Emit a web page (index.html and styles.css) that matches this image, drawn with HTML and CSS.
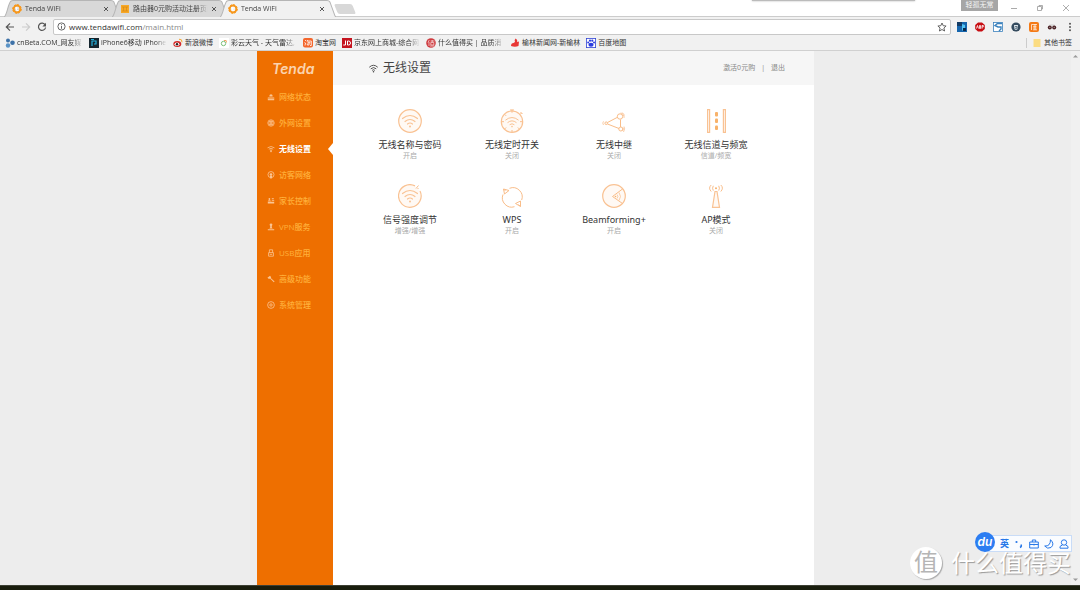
FILE: index.html
```html
<!DOCTYPE html>
<html lang="zh-CN">
<head>
<meta charset="utf-8">
<title>Tenda WiFi</title>
<link rel="stylesheet" href="styles.css">
</head>
<body>
<svg class="defs" aria-hidden="true">
  <symbol id="tenda" viewBox="0 0 10 10"><circle cx="5" cy="5" r="3.400" fill="none" stroke="#f7981d" stroke-width="2"/><circle cx="5" cy="5" r="4.300" fill="none" stroke="#f7981d" stroke-dasharray="2 1.300"/><path d="M3 4h3.500M4.500 3v3.500h2" stroke="#fff" stroke-width="1" fill="none"/></symbol>
  <symbol id="close" viewBox="0 0 6 6"><path d="M1 1l4 4M5 1l-4 4" stroke="#555" stroke-width="1"/></symbol>
  <symbol id="tab" viewBox="0 0 116 16" preserveAspectRatio="none"><path d="M0 16C3 15 4 3 7 1Q8 0.500 9 0.500H107Q109 0.500 110 2L115 15L116 16" stroke="#b5b5b5" stroke-width="1"/></symbol>
  <symbol id="wifi" viewBox="0 0 24 24"><g fill="none" stroke="currentColor" stroke-width="1.200" stroke-linecap="round"><path d="M4.500 9.500Q12 3.500 19.500 9.500"/><path d="M7 12.500Q12 8.500 17 12.500"/><path d="M9.500 15Q12 13 14.500 15"/></g><circle cx="12" cy="17.500" r="1" fill="currentColor"/></symbol>
</svg>

<header class="browser">
  <div class="tabs">
    <div class="tab"><svg class="tab-shape"><use href="#tab"/></svg><svg class="fav"><use href="#tenda"/></svg><span class="tab-title">Tenda WiFi</span><button class="tab-close" aria-label="关闭标签"><svg><use href="#close"/></svg></button></div>
    <div class="tab"><svg class="tab-shape"><use href="#tab"/></svg><svg class="fav" viewBox="0 0 10 10"><rect x="1" y="1" width="8" height="8" fill="#f7a827"/><path d="M2 3h6M2 7h6M3.500 3v4M6.500 3v4" stroke="#d98a12" stroke-width=".7"/></svg><span class="tab-title">路由器0元购活动注册页面</span><button class="tab-close" aria-label="关闭标签"><svg><use href="#close"/></svg></button></div>
    <div class="tab active"><svg class="tab-shape"><use href="#tab"/></svg><svg class="fav"><use href="#tenda"/></svg><span class="tab-title">Tenda WiFi</span><button class="tab-close" aria-label="关闭标签"><svg><use href="#close"/></svg></button></div>
    <button class="new-tab" aria-label="新标签页"></button>
    <div class="window-shadow"></div>
    <div class="window-controls">
      <span class="user">轻孤无常</span>
      <button aria-label="最小化"><svg viewBox="0 0 8 8"><path d="M1 4.500h6" stroke="#aaa"/></svg></button>
      <button aria-label="还原"><svg viewBox="0 0 8 8"><path d="M1.500 2.500h4v4h-4zM3 2.500v-1h3.500V5h-1" fill="none" stroke="#999" stroke-width=".8"/></svg></button>
      <button aria-label="关闭"><svg viewBox="0 0 8 8"><path d="M1 1l6 6M7 1l-6 6" stroke="#999" stroke-width=".8"/></svg></button>
    </div>
  </div>

  <div class="toolbar">
    <button aria-label="后退"><svg viewBox="0 0 10 10"><path d="M9 5H1.500M5 1.300L1.300 5L5 8.700" fill="none" stroke="#555" stroke-width="1.200"/></svg></button>
    <button aria-label="前进"><svg viewBox="0 0 10 10"><path d="M1 5h7.500M5 1.300L8.700 5L5 8.700" fill="none" stroke="#ccc" stroke-width="1.200"/></svg></button>
    <button aria-label="刷新"><svg viewBox="0 0 10 10"><path d="M8.200 3A3.600 3.600 0 1 0 8.600 5.500" fill="none" stroke="#555" stroke-width="1.200"/><path d="M9 .8V4.400H5.400z" fill="#555"/></svg></button>
    <div class="address">
      <svg class="ico9" viewBox="0 0 10 10"><circle cx="5" cy="5" r="4" fill="none" stroke="#555"/><path d="M5 4.400V7.500M5 2.500v1" stroke="#555"/></svg>
      <span class="url">www.tendawifi.com<i>/main.html</i></span>
      <button aria-label="收藏"><svg viewBox="0 0 10 10"><path d="M5 1l1.200 2.700 2.900.3L6.900 6l.7 3L5 7.500 2.400 9l.7-3L.9 4l2.900-.3z" fill="none" stroke="#555" stroke-width=".9"/></svg></button>
    </div>
    <div class="extensions">
      <button aria-label="扩展"><svg viewBox="0 0 10 10"><rect width="10" height="10" fill="#1565ad"/><path d="M0 0h5v4H0z" fill="#123a63"/><path d="M5 2l3 1v3L5 9z" fill="#53c4f2"/><path d="M6 6h3v3H6z" fill="#0a2b50"/></svg></button>
      <button aria-label="广告拦截"><svg viewBox="0 0 10 10"><path d="M3 0.500h4L9.800 3v4L7 9.500H3L.2 7V3z" fill="#c70d12"/><path d="M1.500 6.500l1-3 1 3M4.500 3.500v3h1v-3zM7 6.700V3.500h1.300v1.400H7" stroke="#fff" stroke-width=".8" fill="none"/></svg></button>
      <button aria-label="同步"><svg viewBox="0 0 10 10"><rect x=".5" y=".5" width="9" height="9" fill="#fff" stroke="#3c82bd" stroke-width=".8"/><path d="M9 1.500H4.500L2 3.500L5 5h3v2L6 9" fill="none" stroke="#3c82bd" stroke-width="1.400"/></svg></button>
      <button aria-label="脚本"><svg viewBox="0 0 10 10"><circle cx="5" cy="5" r="4.600" fill="#344b5e"/><path d="M3 3h4L6.500 7.300 5 8 3.500 7.300z" fill="#dce5ea"/><path d="M4 4.500h2v1.800H4" stroke="#344b5e" stroke-width=".7" fill="none"/></svg></button>
      <button aria-label="购物"><svg viewBox="0 0 10 10"><rect width="10" height="10" rx="2" fill="#f47a16"/><path d="M2.500 8V2.500H8M4 4.300h3.500M4 6h3.500M4 7.800h4M6 2v6" stroke="#fff" stroke-width=".7" fill="none"/></svg></button>
      <button aria-label="隐身"><svg viewBox="0 0 10 10"><path d="M2 2.800Q5 1 8 2.800V4H2z" fill="#ddd"/><circle cx="2.800" cy="5.400" r="2" fill="#4a2024"/><circle cx="7.200" cy="5.400" r="2" fill="#4a2024"/><path d="M2 5.400h1.500M6.500 5.400H8" stroke="#ccc" stroke-width=".6"/></svg></button>
      <button aria-label="菜单"><svg viewBox="0 0 10 10"><g fill="#555"><circle cx="5" cy="1.800" r="1"/><circle cx="5" cy="5" r="1"/><circle cx="5" cy="8.200" r="1"/></g></svg></button>
    </div>
  </div>

  <nav class="bookmarks" aria-label="书签">
    <a href="#"><svg viewBox="0 0 10 10"><circle cx="3" cy="2.500" r="2" fill="#3e72a8"/><circle cx="7.500" cy="4.800" r="2.300" fill="#3e72a8"/><circle cx="3" cy="7.500" r="2.200" fill="#5b93c6"/></svg><span>cnBeta.COM_网友媒</span></a>
    <a href="#"><svg viewBox="0 0 10 10"><rect width="10" height="10" fill="#15252e"/><path d="M3 8V3h4v3H5M2 1.500h3" stroke="#25b2dd" stroke-width="1.200" fill="none"/></svg><span>iPhone6移动 iPhone</span></a>
    <a href="#"><svg viewBox="0 0 10 10"><ellipse cx="4.300" cy="6" rx="4" ry="3" fill="#d52b2a"/><ellipse cx="4" cy="6.200" rx="2.400" ry="1.800" fill="#fff"/><circle cx="4" cy="6.300" r="1.200" fill="#222"/><path d="M6 1.200Q9.500 1 9 4.300" stroke="#f5a52c" fill="none"/></svg><span>新浪微博</span></a>
    <a href="#"><svg viewBox="0 0 10 10"><rect width="10" height="10" fill="#fff"/><circle cx="4.500" cy="5.500" r="2.200" fill="none" stroke="#7cc07a"/><path d="M5 2.500Q8 1.500 7.500 4.500" stroke="#f4a261" fill="none"/></svg><span>彩云天气 - 天气雷达,</span></a>
    <a href="#"><svg viewBox="0 0 10 10"><rect width="10" height="9.500" rx="2" fill="#f4662c"/><path d="M2 2l1 1M1.500 4.500l1 .5L2 7.500M4.500 2L4 3.500M4 3h4.300v4.500H7M4.500 4.800h3M6 3.500V7H4.300V5.500" stroke="#fff" stroke-width=".8" fill="none"/></svg><span>淘宝网</span></a>
    <a href="#"><svg viewBox="0 0 10 10"><rect width="10" height="10" fill="#c5141f"/><path d="M3.500 2.500V7H1.300M5.500 3v4h1Q8.500 7 8.500 5T6.500 3z" stroke="#fff" fill="none"/></svg><span>京东网上商城-综合网</span></a>
    <a href="#"><svg viewBox="0 0 10 10"><circle cx="5" cy="5" r="4.800" fill="#cf3c40"/><path d="M3.300 2L2 4.500M3 4v4M4.500 3h4M6.200 2v2M4.800 4.500h3V7h-3zM4 8h4.300" stroke="#fff" stroke-width=".6" fill="none"/></svg><span>什么值得买 | 品质消</span></a>
    <a href="#"><svg viewBox="0 0 10 10"><path d="M5.500.5Q8 2 7 4L9 3.500 8.500 8Q5 9.500 1 8 1 5 3.500 5L5 4Q4 2 5.500.5z" fill="#e83735"/></svg><span>榆林新闻网-新榆林</span></a>
    <a href="#"><svg viewBox="0 0 10 10"><rect x=".4" y=".4" width="9.200" height="9.200" fill="#fff" stroke="#3044d5" stroke-width=".8"/><g fill="#2b3ddf"><ellipse cx="5" cy="6.800" rx="2.600" ry="2"/><circle cx="2.200" cy="4.500" r="1"/><circle cx="4" cy="2.700" r="1.100"/><circle cx="6.300" cy="2.700" r="1.100"/><circle cx="8" cy="4.500" r="1"/></g></svg><span>百度地图</span></a>
    <a class="other" href="#"><svg viewBox="0 0 10 10"><path d="M1.500 1h7v8h-7z" fill="#fbdc82"/></svg><span>其他书签</span></a>
  </nav>
</header>

<div class="viewport">
  <div class="page">
    <aside class="sidebar">
      <div class="logo">Tenda</div>
      <nav class="menu">
        <a href="#"><svg viewBox="0 0 10 10"><path d="M3 3.500a2 2 0 0 1 4 0v1H3z M1 5.500h8V9H1z"/><path d="M1 7h8" stroke="#ee6f00" stroke-width=".6"/></svg>网络状态</a>
        <a href="#"><svg viewBox="0 0 10 10"><circle cx="5" cy="5" r="4" class="line"/><path d="M1.500 5h7M5 1.500v7M2.500 3Q5 4 7.500 3M2.500 7Q5 6 7.500 7" class="line"/></svg>外网设置</a>
        <a class="current" href="#"><svg viewBox="0 0 10 10"><path d="M.7 3.500Q5 .3 9.300 3.500M2.300 5.200Q5 3.200 7.700 5.200M3.700 6.700Q5 5.700 6.300 6.700" class="line"/><circle cx="5" cy="8" r="1"/></svg>无线设置</a>
        <a href="#"><svg viewBox="0 0 10 10"><circle cx="5" cy="4.500" r="3.800" class="line"/><circle cx="5" cy="4.300" r="1.600"/><path d="M3.700 6h2.600L6 9.500H4z"/></svg>访客网络</a>
        <a href="#"><svg viewBox="0 0 10 10"><circle cx="3" cy="2.500" r="1.100"/><path d="M1 5.200Q1 4 3 4T5 5.200zM6 1.700h2.500v1.200H6z M1 6h8V8H1zM6 4h3v1H6z"/></svg>家长控制</a>
        <a href="#"><svg viewBox="0 0 10 10"><circle cx="5" cy="2.300" r="1.700"/><path d="M4 3h2v2.200L7 7H3l1-1.800zM1 7.800h8V9H1z"/></svg>VPN服务</a>
        <a href="#"><svg viewBox="0 0 10 10"><path d="M3 4.500V1h4v3.500M2 4.500h6v4.500H2zM3.500 6.700h3" class="line"/></svg>USB应用</a>
        <a href="#"><svg viewBox="0 0 10 10"><path d="M.5 3.500L3.800 1 5.200 2.800 4.700 3.600 9.500 8.200 8.500 9.200 3.800 4.500 2.500 5z"/></svg>高级功能</a>
        <a href="#"><svg viewBox="0 0 10 10"><circle cx="5" cy="5" r="4.200" class="line"/><circle cx="5" cy="5" r="1.500" class="line"/></svg>系统管理</a>
      </nav>
    </aside>

    <main class="content">
      <div class="title-bar">
        <svg class="title-icon" viewBox="3 4 18 16"><g fill="none" stroke="currentColor" stroke-width="1.800"><path d="M3.500 9.500Q12 1.500 20.500 9.500M6.500 12.700Q12 7.500 17.500 12.700M9.300 15.800Q12 13 14.700 15.800"/></g><circle cx="12" cy="18.300" r="1.500" fill="currentColor"/></svg>
        <h1>无线设置</h1>
        <div class="account"><a href="#">激活0元购</a><span>|</span><a href="#">退出</a></div>
      </div>
      <div class="cards">
        <a class="card" href="#"><svg viewBox="0 0 24 24"><circle cx="12" cy="12" r="11.300" class="disc"/><use href="#wifi" width="24" height="24"/></svg><strong>无线名称与密码</strong><small>开启</small></a>
        <a class="card" href="#"><svg viewBox="0 0 24 24"><circle cx="12" cy="12.700" r="10.700" class="disc"/><path class="line" d="M10 1h4M12 .7v3M20.500 3l2 2M21.500 4L20 5.500M1.500 12.700H4M20 12.700h2.500M12 21v2M4.600 5.300l1.500 1.500M4.600 20l1.500-1.500M19.400 20l-1.500-1.500"/><svg x="2" y="3" width="20" height="20"><use href="#wifi"/></svg></svg><strong>无线定时开关</strong><small>关闭</small></a>
        <a class="card" href="#"><svg viewBox="0 0 24 24"><path class="line" d="M5.500 13.500L16 8M5.500 15L17 19.500M18.500 10.500V18"/><circle class="line" cx="18" cy="7.500" r="2.700"/><circle class="line" cx="18.800" cy="20" r="2"/><circle class="line" cx="4.200" cy="14.200" r="1.300"/><path class="thin" d="M20.300 3.500Q23 5 22 9M18.500 4Q21.500 4 21.500 7M22 17.500Q23.500 19.500 21.500 23M21 18.500Q22 20 20.500 22M1.500 12.300Q0 14 1.500 16"/></svg><strong>无线中继</strong><small>关闭</small></a>
        <a class="card" href="#"><svg viewBox="0 0 24 24"><path class="disc" d="M3.600.6h2v22.800h-2zM19.400.6h2v22.800h-2z"/><g fill="#f8b26a"><rect x="11" y="3" width="3" height="4.500" rx="1"/><rect x="11" y="9.500" width="3" height="4.500" rx="1"/><rect x="11" y="16.500" width="3" height="4.500" rx="1"/></g></svg><strong>无线信道与频宽</strong><small>信道/频宽</small></a>
        <a class="card" href="#"><svg viewBox="0 0 24 24"><path class="disc" d="M17 1.900A11.300 11.300 0 1 0 22 7"/><path class="line" d="M18 4.500L20.500 1.500M19.500 5l1-1"/><use href="#wifi" width="24" height="24"/></svg><strong>信号强度调节</strong><small>增强/增强</small></a>
        <a class="card" href="#"><svg viewBox="0 0 24 24"><path class="line" d="M9.500 4.300A9.300 9.300 0 0 1 21.700 16M14.500 22.700A9.300 9.300 0 0 1 3 10.500M3.500 5l1 5 4.500-3.500zM3.500 5l2 2M15.500 19.500l5-2.500v5.500zM20.500 22.500l-2-2"/></svg><strong>WPS</strong><small>开启</small></a>
        <a class="card" href="#"><svg viewBox="0 0 24 24"><circle cx="12" cy="12" r="11.300" class="disc"/><path class="line" d="M20.500 5L10.500 12.500 20.500 19.500"/><path class="thin" d="M17 8.500Q20 12.500 17 16.500M15 10.500Q16.800 12.500 15 14.500"/><circle cx="13.500" cy="12.500" r=".8" fill="#f8b26a"/></svg><strong>Beamforming+</strong><small>开启</small></a>
        <a class="card" href="#"><svg viewBox="0 0 24 24"><path class="disc" d="M11 7.500h2L15.500 23.300h-7z"/><circle cx="12" cy="4.200" r="1" fill="#f8b26a"/><path class="line" d="M9.300 1.800Q7.800 4.300 9.300 6.600M7.200 1Q4 4 7.200 7.500M14.700 1.800Q16.200 4.300 14.700 6.600M16.800 1Q20 4 16.800 7.500"/></svg><strong>AP模式</strong><small>关闭</small></a>
      </div>
    </main>
  </div>
  <div class="scrollbar"><svg viewBox="0 0 5 4"><path d="M0 3.500L2.500 1 5 3.500z"/></svg><svg viewBox="0 0 5 4"><path d="M0 .5L2.500 3 5 .5z"/></svg></div>
</div>
<footer class="desktop-edge"></footer>

<div class="watermark"><b>值</b><span>什么值得买</span></div>
<div class="ime">
  <b>du</b>
  <span>英</span>
  <svg viewBox="0 0 10 10"><circle cx="2.500" cy="3" r="1.100" fill="#2878e8" stroke="none"/><path d="M7 5.500q1 2-1 3" fill="none" stroke="#2878e8" stroke-width="1.500"/></svg>
  <svg viewBox="0 0 10 10"><path d="M.7 3h8.600v6H.7zM3.300 3V1h3.400v2M.7 5.500h8.600M5 4.800v1.700"/></svg>
  <svg viewBox="0 0 10 10"><path d="M6.500.7Q11 5 7 8.500 3.500 10.500.7 7 6.500 7.500 6.500.7z"/></svg>
  <svg viewBox="0 0 10 10"><circle cx="5" cy="3.500" r="2.700"/><path d="M3.500 5.800L1 7.500V9.200h8V7.500L6.500 5.800"/></svg>
</div>
</body>
</html>
```
FILE: styles.css
```css
* { box-sizing: border-box; }

body {
  margin: 0;
  height: 100vh;
  display: flex;
  flex-direction: column;
  position: relative;
  overflow: hidden;
  background: #ededed;
  color: #333;
  font: 7px/10px "Open Sans", "Noto Sans CJK SC", sans-serif;
}

a { color: inherit; text-decoration: none; }
button { display: flex; padding: 0; border: 0; background: none; }
svg { display: block; flex: none; }
.defs { position: absolute; width: 0; height: 0; }

/* Browser frame */
.browser { background: #f1f1f1; border-bottom: 1px solid #d0d0d0; }

.tabs {
  display: flex;
  height: 17px;
  padding-left: 4px;
  position: relative;
  background: #fff;
  border-bottom: 1px solid #ccc;
}
.tab {
  position: relative;
  display: flex;
  align-items: center;
  gap: 3px;
  width: 116px;
  height: 17px;
  margin-right: -8px;
  padding: 0 11px 0 8px;
  fill: #d8d8d8;
  color: #444;
}
.tab.active { fill: #f1f1f1; z-index: 1; }
.tab-shape { position: absolute; left: 0; top: 0; width: 100%; height: 100%; }
.fav { position: relative; width: 10px; height: 10px; }
.tab-title {
  position: relative;
  flex: 1;
  overflow: hidden;
  white-space: nowrap;
  mask-image: linear-gradient(to right, #000 85%, transparent);
}
.tab-close { position: relative; }
.tab-close svg { width: 6px; height: 6px; }
.new-tab {
  width: 18px;
  height: 10px;
  margin: 4px 0 0 8px;
  background: #d8d8d8;
  border-radius: 2px;
  transform: skewX(22deg);
}
.window-shadow {
  position: absolute;
  top: -2px;
  right: 165px;
  width: 163px;
  height: 3px;
  background: #bbb;
  box-shadow: 0 0 2px #aaa;
}
.window-controls { display: flex; margin-left: auto; padding-right: 10px; gap: 18px; align-items: center; height: 15px; }
.window-controls svg { width: 8px; height: 8px; }
.user { align-self: flex-start; width: 37px; height: 11px; margin-right: -6px; background: #a6a6a6; color: #f5f5f5; text-align: center; }

.toolbar { display: flex; align-items: center; height: 19px; padding: 0 5px; gap: 6px; }
.toolbar > button svg, .extensions svg, .address button svg { width: 10px; height: 10px; }
.address {
  flex: 1;
  display: flex;
  align-items: center;
  gap: 3px;
  height: 16px;
  padding: 0 3px;
  background: #fff;
  border: 1px solid #c8c8c8;
  border-radius: 2px;
}
.ico9 { width: 9px; height: 9px; }
.url { flex: 1; font-size: 8px; color: #333; }
.url i { font-style: normal; color: #888; }
.extensions { display: flex; gap: 8px; }

.bookmarks { display: flex; align-items: center; gap: 6px; height: 14px; padding: 0 8px 0 5px; }
.bookmarks a { display: flex; align-items: center; gap: 2px; }
.bookmarks svg { width: 10px; height: 10px; }
.bookmarks span { white-space: nowrap; }
.bookmarks a:not(.other):nth-child(-n+2) span,
.bookmarks a:nth-child(4) span,
.bookmarks a:nth-child(6) span,
.bookmarks a:nth-child(7) span {
  width: 66px;
  mask-image: linear-gradient(to right, #000 54px, transparent 66px);
}
.bookmarks .other { margin-left: auto; padding-left: 5px; border-left: 1px solid #ccc; }

/* Router page */
.viewport { flex: 1; display: flex; min-height: 0; }
.page { display: flex; flex: 1; max-width: 557px; margin: 0 auto; }
.scrollbar {
  width: 9px;
  display: flex;
  flex-direction: column;
  justify-content: space-between;
  align-items: center;
  padding: 3px 0;
  background: #f0f0f0;
  fill: #999;
}
.scrollbar svg { width: 5px; height: 4px; }

.sidebar { width: 76px; background: #ee6f00; }
.logo {
  padding: 8px 0 0 15px;
  height: 33px;
  font: italic 600 14px/20px Inter, sans-serif;
  color: #fbd3ae;
}
.menu a {
  position: relative;
  display: flex;
  align-items: center;
  gap: 4px;
  height: 26px;
  padding-left: 10px;
  font-size: 8px;
  font-weight: 500;
  color: #ffb03b;
  fill: #fbc594;
}
.menu svg { width: 8px; height: 8px; }
.menu .line { fill: none; stroke: #fbc594; stroke-width: 1; }
.menu .current { color: #fff; font-weight: bold; }
.menu .current::after {
  content: "";
  position: absolute;
  right: 0;
  top: 7px;
  border: 6px solid transparent;
  border-width: 6px 5px 6px 0;
  border-right-color: #fff;
}

.content { flex: 1; background: #fff; }
.title-bar {
  display: flex;
  align-items: center;
  gap: 5px;
  height: 34px;
  padding: 0 29px 0 36px;
  background: #f6f6f6;
}
.title-icon { width: 9px; height: 9px; color: #444; }
h1 { margin: 0; font-size: 12px; line-height: 16px; font-weight: normal; color: #444; }
.account { display: flex; gap: 6px; margin-left: auto; color: #888; }

.cards {
  display: grid;
  grid-template-columns: repeat(4, 102px);
  row-gap: 13px;
  padding: 24px 26px;
}
.card { display: flex; flex-direction: column; align-items: center; color: #f9c293; }
.card svg { width: 24px; height: 24px; margin-bottom: 6px; }
.card svg svg { width: 20px; height: 20px; }
.card strong { font: 9px/12px "Noto Sans", "Noto Sans CJK SC", sans-serif; color: #333; }
.card small { font-size: 7px; line-height: 10px; padding-bottom: 10px; color: #aaa; }
.card .disc { fill: #fff9f4; stroke: #f9c293; stroke-width: 1.2; }
.card .line { fill: none; stroke: #f9bd89; stroke-width: 1; }
.card .thin { fill: none; stroke: #f9c293; stroke-width: 0.8; }

.desktop-edge { height: 5px; background: #191d0d; border-top: 1px solid #3d4034; }

/* Floating overlays */
.watermark {
  position: absolute;
  right: 9px;
  bottom: 11px;
  display: flex;
  align-items: center;
  gap: 9px;
  font-size: 24px;
  line-height: 24px;
  color: #fff;
  text-shadow: 1px 1px 1px #999;
}
.watermark b {
  width: 32px;
  height: 32px;
  border-radius: 50%;
  background: #fff;
  box-shadow: 1px 1px 1px #aaa;
  color: #b5b5b5;
  font-size: 24px;
  line-height: 30px;
  font-weight: normal;
  text-align: center;
  text-shadow: none;
}
.ime {
  position: absolute;
  right: 8px;
  bottom: 38px;
  display: flex;
  align-items: center;
  gap: 5px;
  height: 17px;
  padding-right: 2px;
  background: #fafcff;
  border: 1px solid #c9dcf7;
  color: #2878e8;
}
.ime b {
  width: 20px;
  height: 20px;
  margin: 0 0 3px -10px;
  border-radius: 50%;
  background: #2c7df2;
  color: #fff;
  font: italic 600 12px/19px Inter, sans-serif;
  text-align: center;
}
.ime span { font-size: 9px; font-weight: bold; }
.ime svg { width: 10px; height: 10px; fill: none; stroke: #2878e8; stroke-width: 1; }
```
